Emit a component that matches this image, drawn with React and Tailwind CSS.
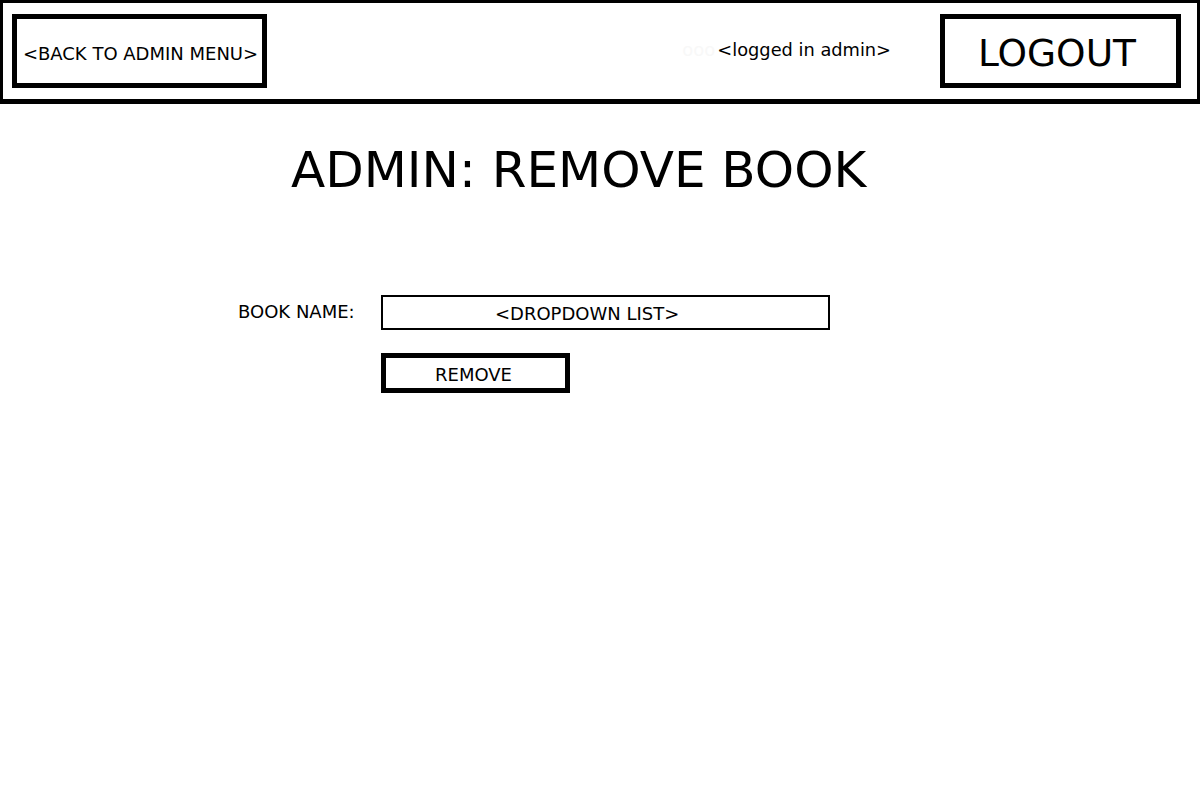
import React from 'react';

export default function App() {
  return (
    <div className="w-[1200px] h-[800px] bg-white text-black font-['DejaVu_Sans',sans-serif]">
      {/* top bar */}
      <header className="h-[104px] border-[3px] border-b-[5px] border-black flex items-start pt-[11px] pl-[9px] pr-[16px]">
        <button className="w-[255px] h-[74px] border-[5px] border-black flex items-center justify-center text-[18px] leading-none whitespace-nowrap pt-[5px] pl-[2px]">
          &lt;BACK TO ADMIN MENU&gt;
        </button>
        <div className="flex-1 flex items-center justify-end h-[74px] pr-[49px] pb-[3px]">
          <span className="text-[18px] leading-none text-[#f8f8f8] mr-[2px]">ooo</span>
          <span className="text-[17.8px] leading-none">&lt;logged in admin&gt;</span>
        </div>
        <button className="w-[241px] h-[74px] border-[5px] border-black flex items-center justify-center text-[37.5px] leading-none pt-[6px] pr-[7px]">
          LOGOUT
        </button>
      </header>

      <main className="flex flex-col">
        <h1 className="mt-[41px] ml-[291px] text-[50px] leading-none whitespace-nowrap">ADMIN: REMOVE BOOK</h1>

        <div className="mt-[100px] ml-[238px] grid grid-cols-[143px_auto] gap-y-[23px] items-center">
          <label className="text-[18px] leading-none pb-[2px]">BOOK NAME:</label>
          <div className="w-[449px] h-[35px] border-[2px] border-black flex items-center text-[18px] leading-none pl-[112px] pt-[2px]">
            &lt;DROPDOWN LIST&gt;
          </div>
          <div />
          <button className="w-[189px] h-[40px] border-[5px] border-black flex items-center justify-center text-[18px] leading-none pr-[4px] pt-[3px]">
            REMOVE
          </button>
        </div>
      </main>
    </div>
  );
}
